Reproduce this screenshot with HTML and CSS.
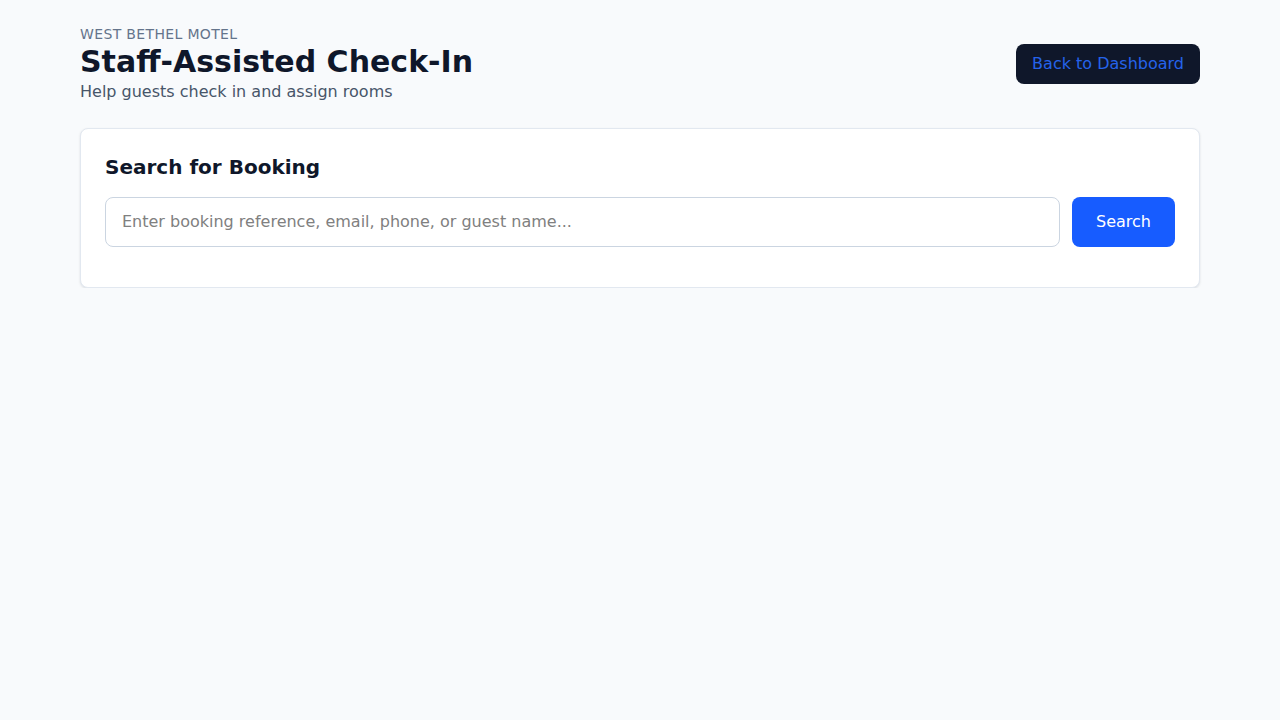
FILE: index.html
```html
<!DOCTYPE html>
<html lang="en">
<head>
<meta charset="utf-8">
<title>Staff-Assisted Check-In</title>
<link rel="stylesheet" href="styles.css">
</head>
<body>
<div class="page">
  <header class="header">
    <div class="titles">
      <div class="eyebrow">West Bethel Motel</div>
      <h1 class="title">Staff-Assisted Check-In</h1>
      <p class="subtitle">Help guests check in and assign rooms</p>
    </div>
    <button class="back-btn" type="button">Back to Dashboard</button>
  </header>
  <section class="card">
    <h2 class="card-title">Search for Booking</h2>
    <form class="search-form">
      <input class="search-input" type="text" placeholder="Enter booking reference, email, phone, or guest name...">
      <button class="search-btn" type="button">Search</button>
    </form>
  </section>
</div>
</body>
</html>
```
FILE: styles.css
```css
* { box-sizing: border-box; }
html, body {
  margin: 0;
  padding: 0;
  background: #f8fafc;
  font-family: "DejaVu Sans", sans-serif;
  color: #0f172a;
}
.page {
  width: 1120px;
  margin: 0 auto;
  padding-top: 24px;
}
.header {
  display: flex;
  justify-content: space-between;
  align-items: center;
  margin-bottom: 24px;
}
.eyebrow {
  font-size: 14px;
  line-height: 20px;
  letter-spacing: 0.025em;
  text-transform: uppercase;
  color: #64748b;
}
.title {
  margin: 0;
  font-size: 30px;
  line-height: 36px;
  font-weight: 700;
  color: #0f172a;
}
.subtitle {
  margin: 0;
  font-size: 16px;
  line-height: 24px;
  color: #475569;
}
.back-btn {
  font-family: inherit;
  font-size: 16px;
  line-height: 24px;
  padding: 8px 16px;
  border: none;
  border-radius: 8px;
  background: #0f172a;
  color: #2563eb;
  cursor: pointer;
}
.card {
  background: #ffffff;
  border: 1px solid #e2e8f0;
  border-radius: 8px;
  box-shadow: 0 1px 3px rgba(15, 23, 42, 0.08), 0 1px 2px rgba(15, 23, 42, 0.04);
  padding: 24px;
}
.card-title {
  margin: 0 0 16px;
  font-size: 20px;
  line-height: 28px;
  font-weight: 700;
  color: #0f172a;
}
.search-form {
  display: flex;
  gap: 12px;
  margin: 0 0 16px;
}
.search-input {
  flex: 1;
  font-family: inherit;
  font-size: 16px;
  line-height: 24px;
  padding: 12px 16px;
  border: 1px solid #cbd5e1;
  border-radius: 8px;
  color: #0f172a;
  background: #ffffff;
  outline: none;
}
.search-input::placeholder {
  color: #808080;
}
.search-btn {
  font-family: inherit;
  font-size: 16px;
  line-height: 24px;
  padding: 12px 24px;
  border: none;
  border-radius: 8px;
  background: #175cff;
  color: #ffffff;
  cursor: pointer;
}
```
